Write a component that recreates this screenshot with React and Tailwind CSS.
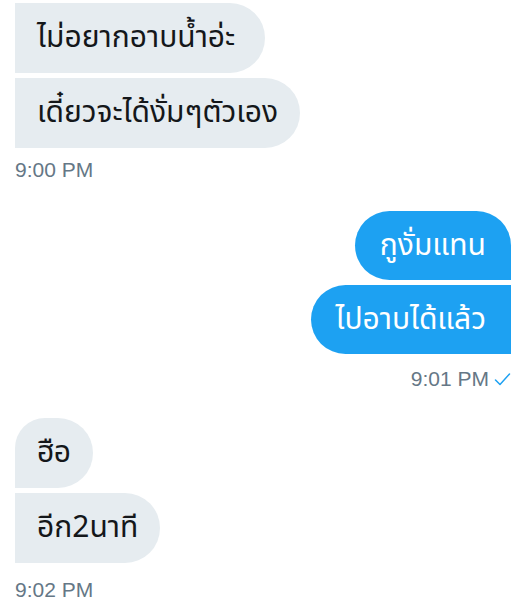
import React from "react";

const thai = { fontFamily: '"Noto Sans Thai", "Noto Sans", "DejaVu Sans", sans-serif' };
const latin = { fontFamily: '"Liberation Sans", Arial, sans-serif' };

function Left({ children, className = "" }) {
  return (
    <div
      className={`self-start h-[70px] flex items-center px-[22px] bg-[#e6ecf0] text-[#14171a] text-[30px] leading-[40px] rounded-r-[35px] ${className}`}
      style={thai}
    >
      {children}
    </div>
  );
}

function Right({ children, className = "" }) {
  return (
    <div
      className={`self-end h-[69px] flex items-center px-[25px] bg-[#1da1f2] text-white text-[30px] leading-[40px] rounded-l-[35px] ${className}`}
      style={thai}
    >
      {children}
    </div>
  );
}

function Time({ children, className = "", check = false }) {
  return (
    <div
      className={`h-[24px] leading-[24px] text-[21px] text-[#657786] flex items-center gap-[5px] ${className}`}
      style={latin}
    >
      <span>{children}</span>
      {check && (
        <svg width="17" height="15" viewBox="0 0 17 15">
          <path d="M1.5 8 L6 12.5 L15.5 2" fill="none" stroke="#1da1f2" strokeWidth="1.5" strokeLinecap="round" strokeLinejoin="round" />
        </svg>
      )}
    </div>
  );
}

export default function App() {
  return (
    <div className="w-[526px] h-[612px] bg-white overflow-hidden flex flex-col px-[15px] pt-[3px]">
      <Left className="pr-[30px]">ไม่อยากอาบน้ำอ่ะ</Left>
      <Left className="mt-[5px]">เดี๋ยวจะได้งั่มๆตัวเอง</Left>
      <Time className="mt-[10px] self-start">9:00 PM</Time>

      <Right className="mt-[29px] rounded-tr-[35px]">กูงั่มแทน</Right>
      <Right className="mt-[5px]">ไปอาบได้แล้ว</Right>
      <Time className="mt-[13px] self-end" check>9:01 PM</Time>

      <Left className="mt-[27px] rounded-tl-[30px]">ฮือ</Left>
      <Left className="mt-[5px]">อีก2นาที</Left>
      <Time className="mt-[15px] self-start">9:02 PM</Time>
    </div>
  );
}
